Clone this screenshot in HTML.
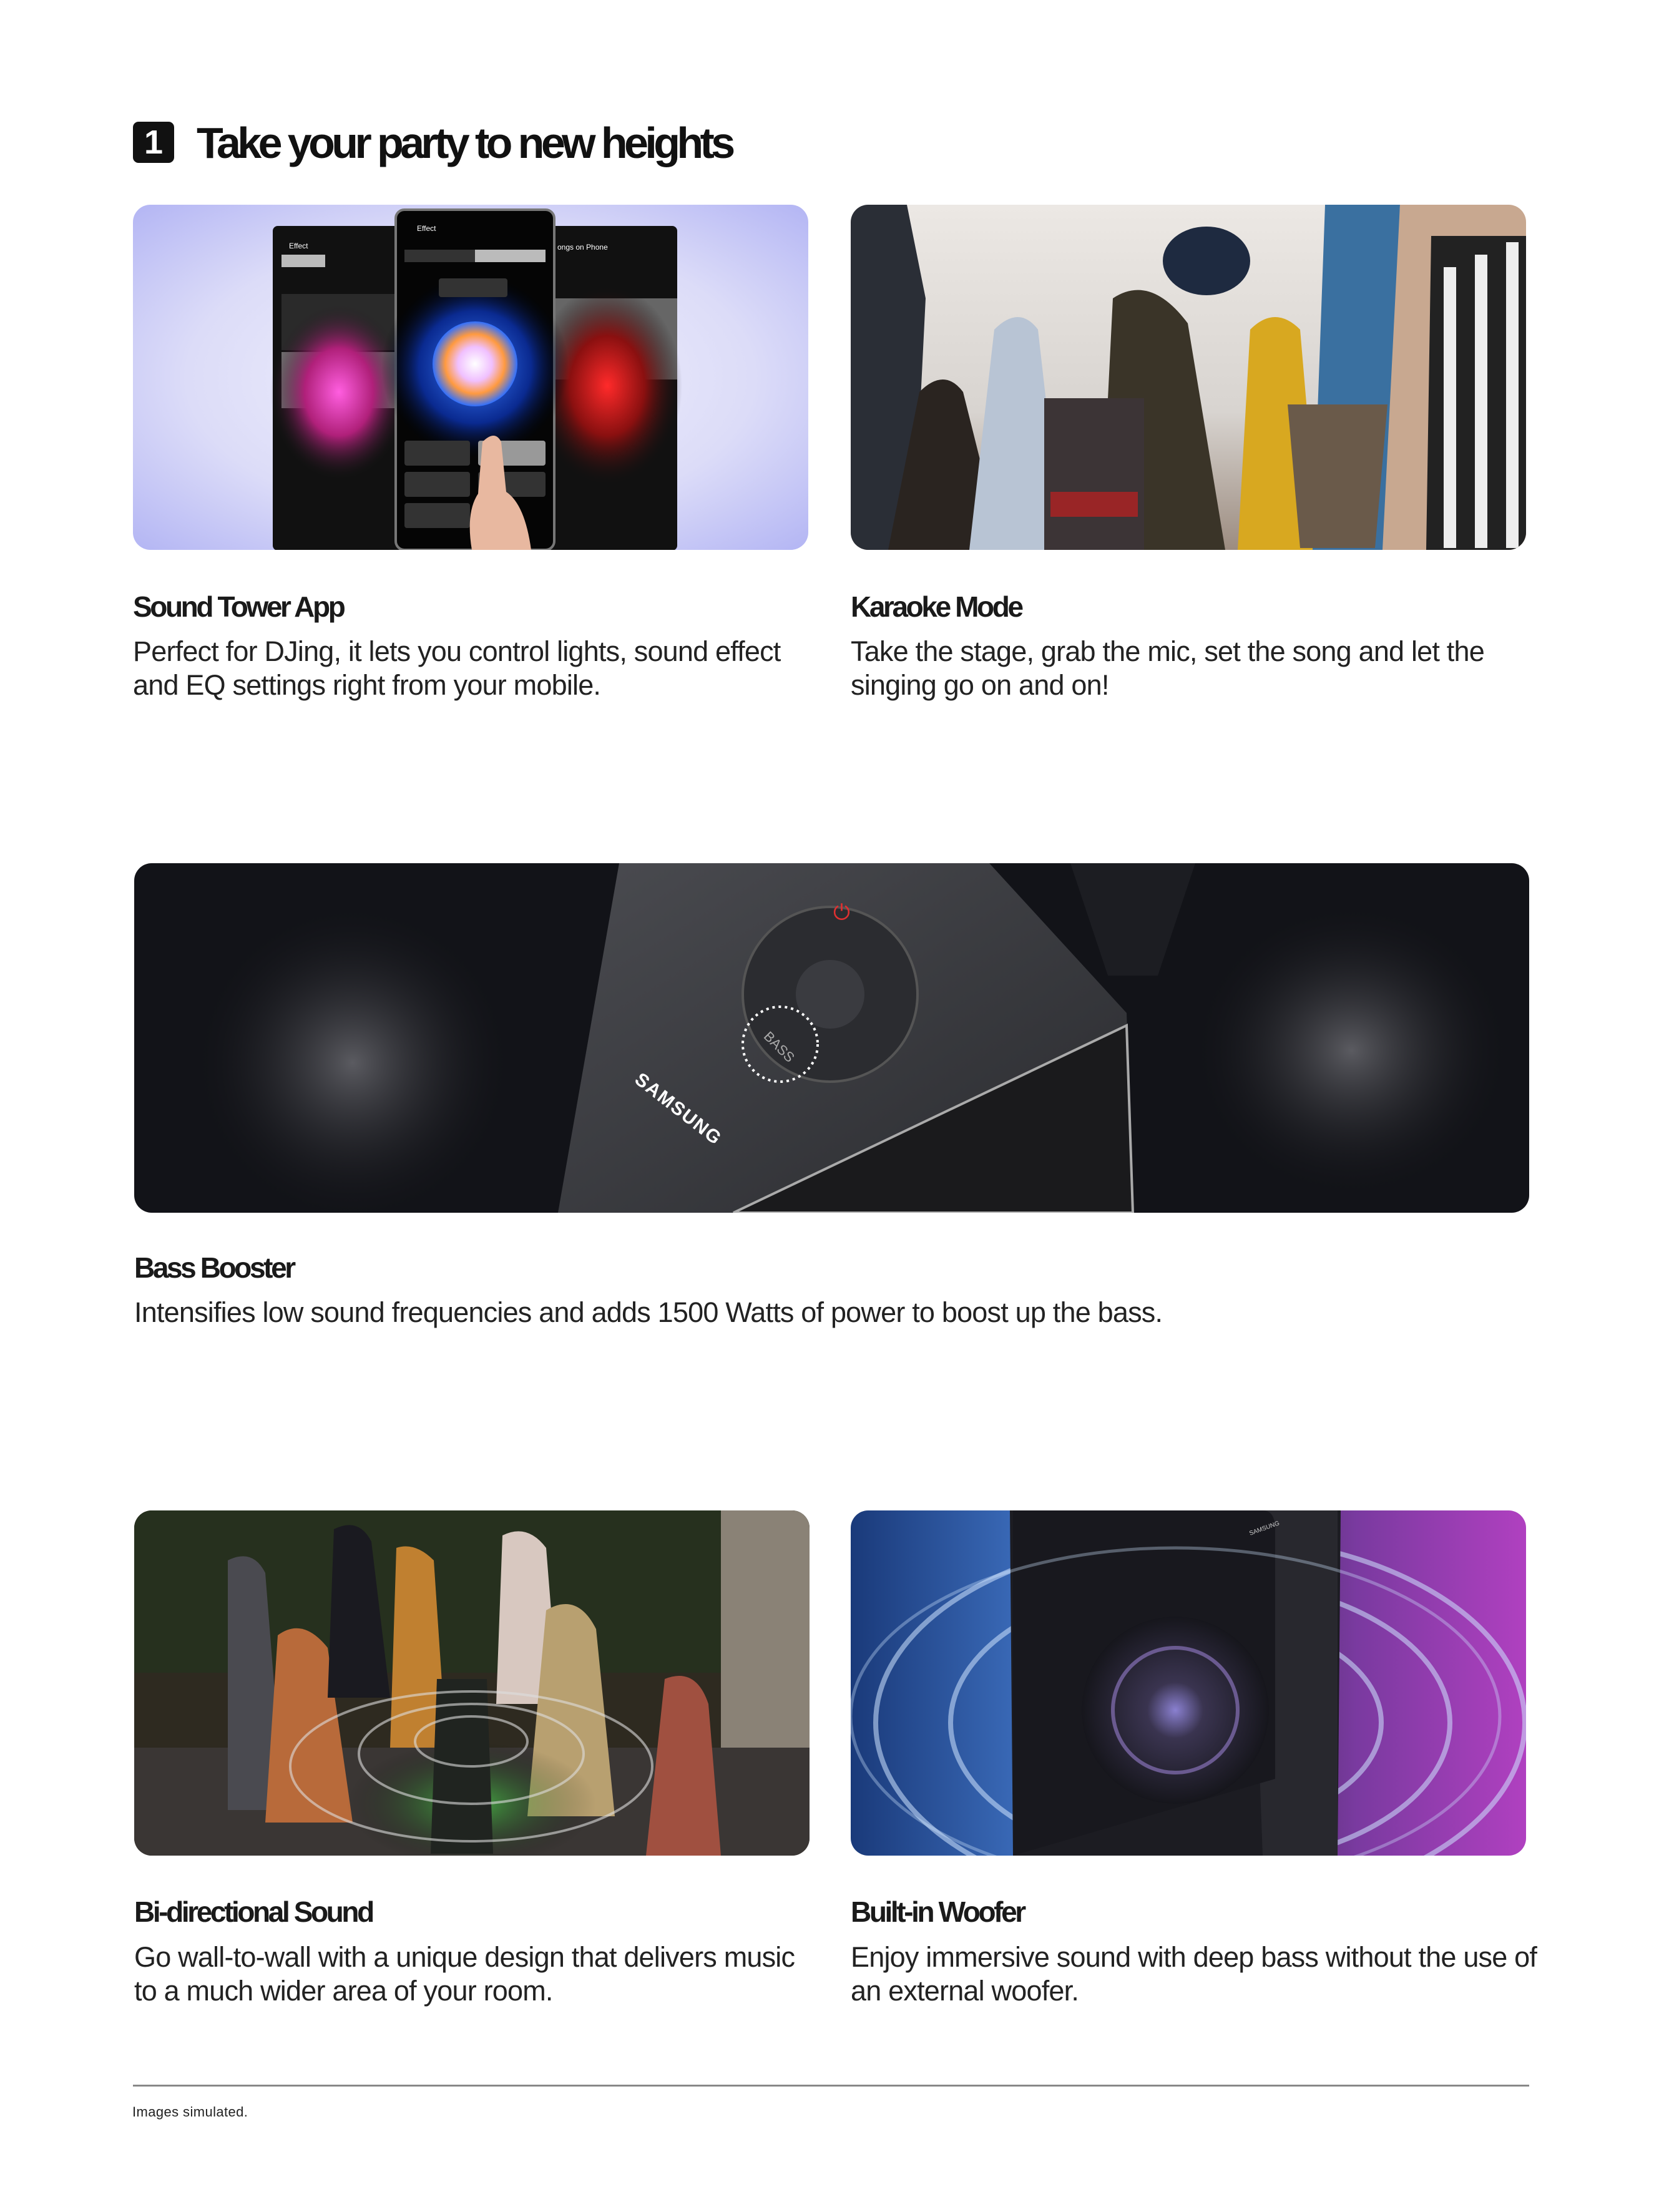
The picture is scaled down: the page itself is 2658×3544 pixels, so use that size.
<!DOCTYPE html>
<html><head><meta charset="utf-8">
<style>
html,body{margin:0;padding:0;background:#fff;}
body{width:2658px;height:3544px;position:relative;overflow:hidden;font-family:"Liberation Sans",sans-serif;color:#000;}
.abs{position:absolute;}
.img{position:absolute;border-radius:28px;overflow:hidden;}
.img svg{display:block;width:100%;height:100%;}
h1{position:absolute;margin:0;left:315px;top:185px;font-size:70px;font-weight:bold;letter-spacing:-5.6px;line-height:88px;color:#111;}
.num{position:absolute;left:213px;top:195px;width:66px;height:66px;background:#111;border-radius:9px;color:#fff;font-weight:bold;font-size:54px;text-align:center;line-height:66px;}
.t{position:absolute;margin:0;font-size:46px;font-weight:bold;letter-spacing:-3.4px;color:#1a1a1a;line-height:56px;}
.p{position:absolute;margin:0;font-size:45px;letter-spacing:-0.8px;color:#222;line-height:54px;}
</style></head><body>

<div class="num">1</div>
<h1>Take your party to new heights</h1>

<!-- Image 1 -->
<div class="img" style="left:213px;top:328px;width:1082px;height:553px;">
<svg viewBox="0 0 1082 553" preserveAspectRatio="none">
<defs>
<radialGradient id="lav" cx="50%" cy="50%" r="70%"><stop offset="0" stop-color="#f4f4fd"/><stop offset="0.6" stop-color="#dcdcf8"/><stop offset="1" stop-color="#b4b6f4"/></radialGradient>
<radialGradient id="pk" cx="50%" cy="50%" r="50%"><stop offset="0" stop-color="#ff5ee0"/><stop offset="0.5" stop-color="#b0207a"/><stop offset="1" stop-color="#1a1a1a" stop-opacity="0"/></radialGradient>
<radialGradient id="rd" cx="50%" cy="50%" r="50%"><stop offset="0" stop-color="#ff2a2a"/><stop offset="0.5" stop-color="#8a1010"/><stop offset="1" stop-color="#111" stop-opacity="0"/></radialGradient>
<radialGradient id="bl" cx="50%" cy="50%" r="50%"><stop offset="0" stop-color="#3a7bff"/><stop offset="0.6" stop-color="#0a2a90"/><stop offset="1" stop-color="#000" stop-opacity="0"/></radialGradient>
<radialGradient id="wh" cx="50%" cy="50%" r="50%"><stop offset="0" stop-color="#fff"/><stop offset="0.4" stop-color="#f0c0ff"/><stop offset="0.7" stop-color="#ff9a40"/><stop offset="1" stop-color="#3070ff"/></radialGradient>
</defs>
<rect width="1082" height="553" fill="url(#lav)"/>
<rect x="224" y="34" width="210" height="520" rx="8" fill="#111"/>
<rect x="238" y="143" width="190" height="90" fill="#2a2a2a"/>
<rect x="238" y="236" width="190" height="90" fill="#777"/>
<ellipse cx="330" cy="300" rx="110" ry="140" fill="url(#pk)"/>
<rect x="238" y="80" width="70" height="20" fill="#bbb"/>
<text x="250" y="70" font-size="12" fill="#fff" font-family="Liberation Sans">Effect</text>
<rect x="660" y="34" width="212" height="520" rx="8" fill="#111"/>
<rect x="675" y="150" width="197" height="130" fill="#666"/>
<ellipse cx="760" cy="290" rx="120" ry="160" fill="url(#rd)"/>
<text x="680" y="72" font-size="12" fill="#fff" font-family="Liberation Sans">ongs on Phone</text>
<rect x="421" y="8" width="254" height="545" rx="14" fill="#050505" stroke="#777" stroke-width="4"/>
<ellipse cx="548" cy="260" rx="150" ry="150" fill="url(#bl)"/>
<circle cx="548" cy="255" r="68" fill="url(#wh)"/>
<rect x="435" y="72" width="226" height="20" fill="#333"/><rect x="548" y="72" width="113" height="20" fill="#bbb"/>
<rect x="490" y="118" width="110" height="30" rx="4" fill="#333"/>
<rect x="435" y="378" width="105" height="40" rx="4" fill="#333"/><rect x="553" y="378" width="108" height="40" rx="4" fill="#999"/>
<rect x="435" y="428" width="105" height="40" rx="4" fill="#333"/><rect x="553" y="428" width="108" height="40" rx="4" fill="#333"/>
<rect x="435" y="478" width="105" height="40" rx="4" fill="#333"/>
<path d="M560 380 q20 -20 30 0 l8 80 q30 20 40 93 h-95 q-10 -60 10 -90z" fill="#e8b8a0"/>
<text x="455" y="42" font-size="12" fill="#fff" font-family="Liberation Sans">Effect</text>
</svg></div>

<!-- Image 2 -->
<div class="img" style="left:1363px;top:328px;width:1082px;height:553px;">
<svg viewBox="0 0 1082 553" preserveAspectRatio="none">
<defs><linearGradient id="sky" x1="0" y1="0" x2="0" y2="1"><stop offset="0" stop-color="#ece8e4"/><stop offset="0.6" stop-color="#d8d4d0"/><stop offset="1" stop-color="#9c8c80"/></linearGradient></defs>
<rect width="1082" height="553" fill="url(#sky)"/>
<path d="M0 0 h90 l30 150 l-20 403 h-100z" fill="#2a2e36"/>
<path d="M110 300 q40 -40 70 0 l40 160 l-10 93 h-150z" fill="#2a2420"/>
<path d="M230 200 q40 -40 70 0 l40 353 h-150z" fill="#b8c4d4"/>
<path d="M420 150 q60 -40 120 40 l60 363 h-200z" fill="#3a3428"/>
<ellipse cx="570" cy="90" rx="70" ry="55" fill="#1e2a40"/>
<path d="M640 200 q40 -40 80 0 l30 353 h-130z" fill="#d8a820"/>
<path d="M760 0 h120 l-10 553 h-130z" fill="#3a70a0"/>
<path d="M880 0 h202 v553 h-230z" fill="#c8a890"/>
<path d="M930 50 h152 v503 h-160z" fill="#222"/>
<rect x="950" y="100" width="20" height="450" fill="#eee"/><rect x="1000" y="80" width="20" height="470" fill="#eee"/><rect x="1050" y="60" width="20" height="490" fill="#eee"/>
<path d="M700 320 h160 l-20 230 h-120z" fill="#6a5a4a"/>
<rect x="310" y="310" width="160" height="243" fill="#3c3436"/>
<rect x="320" y="460" width="140" height="40" fill="#c02020" opacity="0.7"/>
</svg></div>

<p class="t" style="left:213px;top:944px;">Sound Tower App</p>
<p class="p" style="left:213px;top:1017px;">Perfect for DJing, it lets you control lights, sound effect<br>and EQ settings right from your mobile.</p>
<p class="t" style="left:1363px;top:944px;">Karaoke Mode</p>
<p class="p" style="left:1363px;top:1017px;">Take the stage, grab the mic, set the song and let the<br>singing go on and on!</p>

<!-- Wide image -->
<div class="img" style="left:215px;top:1383px;width:2235px;height:560px;">
<svg viewBox="0 0 2235 560" preserveAspectRatio="none">
<defs>
<radialGradient id="dust" cx="50%" cy="50%" r="50%"><stop offset="0" stop-color="#7a7a80" stop-opacity="0.7"/><stop offset="1" stop-color="#101014" stop-opacity="0"/></radialGradient>
<linearGradient id="body" x1="0" y1="0" x2="1" y2="1"><stop offset="0" stop-color="#4a4b50"/><stop offset="1" stop-color="#2a2b2f"/></linearGradient>
</defs>
<rect width="2235" height="560" fill="#121318"/>
<ellipse cx="350" cy="320" rx="260" ry="260" fill="url(#dust)"/>
<ellipse cx="1950" cy="300" rx="260" ry="240" fill="url(#dust)"/>
<path d="M1500 0 h200 l-60 180 l-80 0z" fill="#1c1d22"/>
<path d="M777 0 L1370 0 L1590 240 L1600 560 L679 560 Z" fill="url(#body)"/>
<path d="M1590 260 L1600 560 L960 560 Z" fill="#1a1a1c" stroke="#aaa" stroke-width="4"/>
<circle cx="1115" cy="210" r="140" fill="#2b2c30" stroke="#555" stroke-width="4"/>
<circle cx="1115" cy="210" r="55" fill="#3a3b40"/>
<circle cx="1035" cy="290" r="60" fill="none" stroke="#fff" stroke-width="4" stroke-dasharray="4 6"/>
<text x="1006" y="298" font-size="22" fill="#aaa" transform="rotate(45 1030 290)" font-family="Liberation Sans">BASS</text>
<text x="1120" y="90" font-size="34" fill="#e03030" font-family="Liberation Sans">⏻</text>
<text x="800" y="350" font-size="30" font-weight="bold" fill="#fff" transform="rotate(38 800 350)" font-family="Liberation Sans" letter-spacing="2">SAMSUNG</text>
</svg></div>

<p class="t" style="left:215px;top:2003px;">Bass Booster</p>
<p class="p" style="left:215px;top:2076px;">Intensifies low sound frequencies and adds 1500 Watts of power to boost up the bass.</p>

<!-- Image 4 -->
<div class="img" style="left:215px;top:2420px;width:1082px;height:553px;">
<svg viewBox="0 0 1082 553" preserveAspectRatio="none">
<defs><radialGradient id="gr" cx="50%" cy="50%" r="50%"><stop offset="0" stop-color="#50ff50" stop-opacity="0.6"/><stop offset="1" stop-color="#000" stop-opacity="0"/></radialGradient></defs>
<rect width="1082" height="553" fill="#2e2a20"/>
<rect width="1082" height="260" fill="#26301e"/>
<rect x="940" y="0" width="142" height="553" fill="#8a8276"/>
<rect x="0" y="380" width="1082" height="173" fill="#3a3634"/>
<path d="M150 80 q40 -20 60 20 l30 380 h-90z" fill="#4a4a50"/>
<path d="M230 200 q40 -30 80 20 l40 280 h-140z" fill="#b86a3a"/>
<path d="M320 30 q40 -20 60 20 l30 250 h-100z" fill="#1a1a20"/>
<path d="M420 60 q30 -10 60 20 l20 300 h-90z" fill="#c08030"/>
<path d="M590 40 q40 -20 70 20 l20 250 h-100z" fill="#d8c8c0"/>
<path d="M660 160 q50 -30 80 30 l30 300 h-140z" fill="#b8a070"/>
<path d="M850 270 q50 -20 70 40 l20 243 h-120z" fill="#a05040"/>
<ellipse cx="540" cy="470" rx="200" ry="100" fill="url(#gr)"/>
<path d="M485 270 h80 l10 280 h-100z" fill="#202420"/>
<ellipse cx="540" cy="410" rx="290" ry="120" fill="none" stroke="#ddd" stroke-width="4" opacity="0.6"/>
<ellipse cx="540" cy="390" rx="180" ry="80" fill="none" stroke="#ddd" stroke-width="4" opacity="0.6"/>
<ellipse cx="540" cy="370" rx="90" ry="40" fill="none" stroke="#ddd" stroke-width="4" opacity="0.6"/>
</svg></div>

<!-- Image 5 -->
<div class="img" style="left:1363px;top:2420px;width:1082px;height:553px;">
<svg viewBox="0 0 1082 553" preserveAspectRatio="none">
<defs>
<linearGradient id="bp" x1="0" y1="0" x2="1" y2="0"><stop offset="0" stop-color="#1a3a7a"/><stop offset="0.25" stop-color="#3a6ab8"/><stop offset="0.5" stop-color="#2a2a40"/><stop offset="0.75" stop-color="#7a3aa0"/><stop offset="1" stop-color="#b040c0"/></linearGradient>
<radialGradient id="cone" cx="50%" cy="50%" r="50%"><stop offset="0" stop-color="#8a80d0"/><stop offset="0.3" stop-color="#3a3450"/><stop offset="1" stop-color="#16161c"/></radialGradient>
</defs>
<rect width="1082" height="553" fill="url(#bp)"/>
<g fill="none" stroke="#cfe4ff" stroke-width="8" opacity="0.55">
<ellipse cx="560" cy="340" rx="520" ry="300"/><ellipse cx="560" cy="340" rx="400" ry="230"/><ellipse cx="560" cy="340" rx="290" ry="170"/>
</g>
<path d="M255 0 h530 l-5 553 h-520z" fill="#1c1c22"/>
<path d="M640 0 h140 v553 h-120z" fill="#28282e"/>
<path d="M260 0 h400 q20 0 20 30 v400 l-420 123z" fill="#18181e"/>
<circle cx="520" cy="320" r="150" fill="url(#cone)"/>
<circle cx="520" cy="320" r="100" fill="none" stroke="#6a5a90" stroke-width="6"/>
<ellipse cx="520" cy="330" rx="520" ry="270" fill="none" stroke="#cfe4ff" stroke-width="5" opacity="0.35"/>
<text x="640" y="40" font-size="10" fill="#ccc" transform="rotate(-20 640 40)" font-family="Liberation Sans">SAMSUNG</text>
</svg></div>

<p class="t" style="left:215px;top:3035px;">Bi-directional Sound</p>
<p class="p" style="left:215px;top:3109px;">Go wall-to-wall with a unique design that delivers music<br>to a much wider area of your room.</p>
<p class="t" style="left:1363px;top:3035px;">Built-in Woofer</p>
<p class="p" style="left:1363px;top:3109px;">Enjoy immersive sound with deep bass without the use of<br>an external woofer.</p>

<div class="abs" style="left:213px;top:3340px;width:2237px;height:3px;background:#888;"></div>
<div class="abs" style="left:212px;top:3371px;font-size:22px;letter-spacing:0.4px;color:#222;">Images simulated.</div>

</body></html>
